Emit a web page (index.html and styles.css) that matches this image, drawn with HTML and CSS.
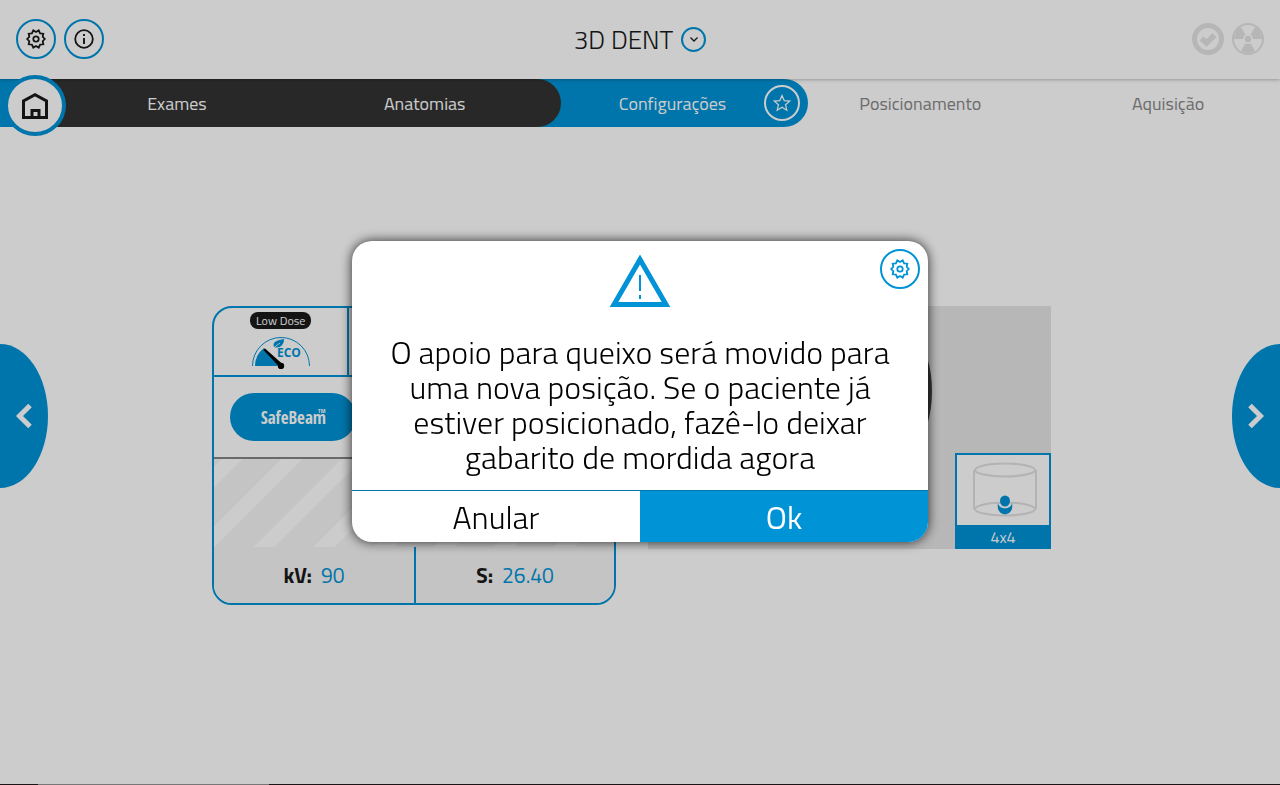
FILE: index.html
```html
<!DOCTYPE html>
<html lang="pt">
<head>
<meta charset="utf-8">
<title>3D DENT</title>
<meta name="viewport" content="width=device-width, initial-scale=1">
<link rel="stylesheet" href="styles.css">
</head>
<body>
<svg class="defs" aria-hidden="true">
  <symbol id="gear" viewBox="-12 -12 24 24">
    <path d="M8.800 0 6.700 2.200 7.300 5.300 4.100 5.600 2.700 8.600 0 7-2.700 8.600-4.100 5.600-7.300 5.300-6.700 2.200-8.800 0-6.700-2.200-7.300-5.300-4.100-5.600-2.700-8.600 0-7 2.700-8.600 4.100-5.600 7.300-5.300 6.700-2.200Z" fill="none" stroke="currentColor" stroke-width="1.800"/>
    <circle r="2.700" fill="none" stroke="currentColor" stroke-width="1.800"/>
  </symbol>
</svg>
<div class="app">
  <header class="topbar">
    <div class="tools">
      <button class="round" aria-label="Ajustes"><svg width="24" height="24"><use href="#gear"/></svg></button>
      <button class="round" aria-label="Informações">
        <svg width="24" height="24" viewBox="-12 -12 24 24"><circle r="8.800" fill="none" stroke="currentColor" stroke-width="1.800"/><path d="M0-1V5" stroke="currentColor" stroke-width="1.900"/><path d="M0-5V-3" stroke="currentColor" stroke-width="1.900"/></svg>
      </button>
    </div>
    <div class="heading">
      <h1 class="title">3D DENT</h1>
      <button class="drop" aria-label="Mostrar opções"><svg width="12" height="12" viewBox="0 0 12 12"><path d="M2.500 4.500 6 8 9.500 4.500" fill="none" stroke="currentColor" stroke-width="1.300"/></svg></button>
    </div>
    <div class="status">
      <svg width="32" height="32" viewBox="-16 -16 32 32"><circle r="13.500" fill="none" stroke="currentColor" stroke-width="5"/><path d="M-6.500-.5-1.500 4 6.500-4" fill="none" stroke="currentColor" stroke-width="5.500"/></svg>
      <svg width="32" height="32" viewBox="-16 -16 32 32"><circle r="15" fill="none" stroke="currentColor" stroke-width="2"/><circle r="3.200" fill="currentColor"/><path d="M-5 0H-14A14 14 0 0 1-7-12.100L-2.500-4.300A5 5 0 0 0-5 0ZM5 0H14A14 14 0 0 0 7-12.100L2.500-4.300A5 5 0 0 1 5 0ZM-2.500 4.300-7 12.100A14 14 0 0 0 7 12.100L2.500 4.300A5 5 0 0 1-2.500 4.300Z" fill="currentColor"/></svg>
    </div>
  </header>

  <nav class="steps">
    <button class="home" aria-label="Início">
      <svg width="28" height="28" viewBox="0 0 28 28"><path d="M2.500 25.500V9L14 2.800 25.500 9V25.500Z" fill="none" stroke="currentColor" stroke-width="3"/><path d="M11 25V18.500H18V25" fill="none" stroke="currentColor" stroke-width="3"/></svg>
    </button>
    <a href="#exames" class="step done">Exames</a>
    <a href="#anatomias" class="step done last-done">Anatomias</a>
    <div class="step current">
      <a href="#configuracoes" class="step-link">Configurações</a>
      <button class="star" aria-label="Favorito"><svg width="18" height="18" viewBox="0 0 18 18"><path d="M9 1.500 11.200 6.600 16.700 7.100 12.500 10.700 13.800 16.200 9 13.300 4.200 16.200 5.500 10.700 1.300 7.100 6.800 6.600Z" fill="none" stroke="currentColor" stroke-width="1.200"/></svg></button>
    </div>
    <a href="#posicionamento" class="step">Posicionamento</a>
    <a href="#aquisicao" class="step">Aquisição</a>
  </nav>

  <main class="content">
    <section class="settings">
      <div class="doses">
        <button class="dose">
          <span class="tag">Low Dose</span>
          <svg width="60" height="34" viewBox="0 0 60 34">
            <path d="M1.500 31A28.500 28.500 0 0 1 58.500 31" fill="none" stroke="#0093d6"/>
            <path d="M4 31Q4 20 13 13L29 31Z" fill="#0093d6"/>
            <path d="M12.500 15 14 13.500 32 29.500 29 32.500Z" fill="#000"/>
            <circle cx="30" cy="31" r="3.200" fill="#000"/>
            <path d="M23 12C21 7 26 5 33 4 33 10 29 14 23 12Z" fill="#0093d6"/>
            <path d="M21 14 29 8" stroke="#fff" stroke-width=".8"/>
            <text class="eco" x="26" y="22">ECO</text>
          </svg>
        </button>
        <div class="dose"></div>
        <div class="dose"></div>
      </div>
      <div class="modes"><button class="beam">SafeBeam<sup class="tm">TM</sup></button></div>
      <div class="stripes"></div>
      <dl class="values">
        <div class="value"><dt>kV:</dt><dd>90</dd></div>
        <div class="value"><dt>S:</dt><dd>26.40</dd></div>
      </dl>
    </section>
    <section class="preview">
      <svg class="jaw" viewBox="0 0 136 210" aria-hidden="true"><path d="M68 0C110 0 136 38 136 85 136 132 110 170 68 190 26 170 0 132 0 85 0 38 26 0 68 0Z" fill="#404444"/></svg>
      <button class="volume">
        <svg class="cylinder" width="68" height="60" viewBox="0 0 68 60">
          <g fill="none" stroke="#e0e0e0" stroke-width="2"><ellipse cx="34" cy="10" rx="30" ry="6.500"/><ellipse cx="34" cy="49" rx="30" ry="6.500"/><path d="M5 11H3V48H5M63 11H65V48H63"/></g>
          <path d="M27 43C28 50 40 50 41 43 44 58 24 58 27 43Z" fill="#0093d6"/>
          <ellipse cx="34" cy="41" rx="5" ry="5.500" fill="#0093d6"/>
        </svg>
        <span class="size">4x4</span>
      </button>
    </section>
  </main>

  <button class="pager prev" aria-label="Anterior"><svg width="18" height="26" viewBox="0 0 18 26"><path d="M15 2.500 4.500 13 15 23.500" fill="none" stroke="currentColor" stroke-width="5"/></svg></button>
  <button class="pager next" aria-label="Seguinte"><svg width="18" height="26" viewBox="0 0 18 26"><path d="M3 2.500 13.500 13 3 23.500" fill="none" stroke="currentColor" stroke-width="5"/></svg></button>
</div>

<div class="overlay">
  <div class="dialog" role="alertdialog" aria-labelledby="message">
    <button class="round dialog-gear" aria-label="Ajustes"><svg width="24" height="24"><use href="#gear"/></svg></button>
    <div class="dialog-body">
      <svg class="warning" width="62" height="54" viewBox="0 0 62 54"><path d="M31 5.500 57 50.500H5Z" fill="none" stroke="currentColor" stroke-width="5"/><path d="M31 21V37M31 41V45" stroke="currentColor" stroke-width="2"/></svg>
      <p class="message" id="message">O apoio para queixo será movido para uma nova posição. Se o paciente já estiver posicionado, fazê-lo deixar gabarito de mordida agora</p>
    </div>
    <div class="actions">
      <button class="action">Anular</button>
      <button class="action primary">Ok</button>
    </div>
  </div>
</div>
<div class="edge"></div>
</body>
</html>
```

FILE: styles.css
```css
:root {
  --blue: #0093d6;
  --ink: #1a1a1a;
}

* { box-sizing: border-box; }

body {
  margin: 0;
  font-family: "Titillium Web", Roboto, "Open Sans", sans-serif;
  color: var(--ink);
  background: #fff;
}

button {
  margin: 0;
  padding: 0;
  border: 0;
  background: none;
  font: inherit;
  color: inherit;
  cursor: pointer;
}

svg { display: block; flex: none; }
a { color: inherit; text-decoration: none; }
.defs { position: absolute; width: 0; height: 0; }

.app {
  position: relative;
  min-height: 100vh;
  overflow: hidden;
}

.topbar {
  position: relative;
  z-index: 10;
  display: grid;
  grid-template-columns: 1fr auto 1fr;
  align-items: center;
  height: 79px;
  padding: 0 16px 1px;
  box-shadow: 0 0 4px rgba(0, 0, 0, .4);
}

.tools, .status { display: flex; gap: 8px; }
.status { justify-content: flex-end; color: #e4e4e4; }

.round {
  display: grid;
  place-items: center;
  width: 40px;
  height: 40px;
  border: 2px solid var(--blue);
  border-radius: 50%;
}

.heading { display: flex; align-items: center; gap: 8px; }
.title { margin: 0; padding-top: 2px; font-size: 26px; font-weight: 300; line-height: 34px; }

.drop {
  display: grid;
  place-items: center;
  width: 25px;
  height: 25px;
  border: 2px solid var(--blue);
  border-radius: 50%;
}

.steps {
  position: relative;
  display: grid;
  grid-template-columns: repeat(5, minmax(0, 1fr));
  height: 48px;
  padding-left: 41px;
  background: linear-gradient(to right, var(--blue) 41px, transparent 41px);
  font-size: 18px;
  color: #888;
}

.home {
  position: absolute;
  z-index: 20;
  top: -4px;
  left: 4px;
  display: grid;
  place-items: center;
  width: 62px;
  height: 61px;
  border: 4px solid var(--blue);
  border-radius: 50%;
  background: #fff;
  color: var(--ink);
}

.step {
  position: relative;
  display: flex;
  align-items: center;
  justify-content: center;
  margin-right: -24px;
}

.done { z-index: 3; background: #333; color: #fff; }
.last-done { border-radius: 0 24px 24px 0; }
.current { z-index: 2; background: var(--blue); color: #fff; border-radius: 0 24px 24px 0; }

.star {
  position: absolute;
  right: 8px;
  display: grid;
  place-items: center;
  width: 36px;
  height: 36px;
  border: 2px solid #fff;
  border-radius: 50%;
}

.content {
  display: grid;
  grid-template-columns: minmax(0, 404px) minmax(0, 403px);
  justify-content: center;
  align-items: start;
  gap: 32px;
  padding: 179px 80px 0 63px;
}

.settings {
  overflow: hidden;
  border: 2px solid var(--blue);
  border-radius: 20px;
}

.doses {
  display: grid;
  grid-template-columns: repeat(3, 1fr);
  border-bottom: 2px solid var(--blue);
}

.dose {
  display: flex;
  flex-direction: column;
  align-items: center;
  gap: 6px;
  height: 67px;
  padding-top: 4px;
}

.dose + .dose { border-left: 2px solid var(--blue); }

.tag {
  padding: 0 6px;
  border-radius: 8px;
  background: var(--ink);
  color: #fff;
  font-size: 12px;
  line-height: 17px;
}

.eco { font: bold 12px "Open Sans", sans-serif; fill: var(--blue); }

.modes { display: flex; padding: 16px; border-bottom: 2px solid #858585; }

.beam {
  width: 126px;
  height: 48px;
  border-radius: 24px;
  background: var(--blue);
  color: #fff;
  font: bold 17px "Liberation Sans Narrow", "Open Sans Condensed", Roboto, sans-serif;
}

.tm { margin-left: -8px; font-size: 6px; line-height: 0; vertical-align: 11px; }

.stripes {
  height: 88px;
  background: linear-gradient(135deg, #f5f5f5 6%, #fff 6% 24%, #f5f5f5 24% 56%, #fff 56% 74%, #f5f5f5 74%) 0 0 / 60px 60px;
}

.values {
  display: grid;
  grid-template-columns: 1fr 1fr;
  margin: 0;
  background: #f5f5f5;
  font-size: 21px;
}

.value { display: flex; align-items: center; justify-content: center; gap: 9px; height: 56px; }
.value + .value { border-left: 2px solid var(--blue); }
.value dt { font-weight: 700; }
.value dd { margin: 0; color: var(--blue); }

.preview {
  display: flex;
  align-items: flex-start;
  justify-content: flex-end;
  gap: 23px;
  height: 243px;
  background: #e5e5e5;
}

.jaw { width: 136px; height: 210px; }

.volume {
  display: flex;
  flex-direction: column;
  align-self: flex-end;
  width: 96px;
  height: 96px;
  border: 2px solid var(--blue);
  background: #fff;
}

.cylinder { margin: 5px 0 5px 14px; }

.size {
  width: 100%;
  background: var(--blue);
  color: #fff;
  font-size: 16px;
  line-height: 24px;
}

.pager {
  position: absolute;
  top: 344px;
  width: 48px;
  height: 144px;
  display: grid;
  place-items: center;
  background: var(--blue);
  color: #fff;
}

.prev { left: 0; border-radius: 0 48px 48px 0 / 0 72px 72px 0; }
.next { right: 0; border-radius: 48px 0 0 48px / 72px 0 0 72px; }

.overlay {
  position: fixed;
  inset: 0;
  z-index: 100;
  display: grid;
  place-items: center;
  padding-bottom: 2px;
  background: rgba(0, 0, 0, .2);
}

.dialog {
  position: relative;
  overflow: hidden;
  width: 45%;
  min-width: 320px;
  border-radius: 20px;
  background: #fff;
  box-shadow: 0 0 12px rgba(0, 0, 0, .8);
  color: #000;
}

.dialog-gear { position: absolute; top: 8px; right: 8px; color: var(--blue); }

.dialog-body {
  display: flex;
  flex-direction: column;
  align-items: center;
  gap: 27px;
  padding: 13px 32px 15px;
}

.warning { color: var(--blue); }

.message {
  margin: 0;
  font-size: 32px;
  font-weight: 300;
  line-height: 35px;
  text-align: center;
}

.actions {
  display: grid;
  grid-template-columns: 1fr 1fr;
  border-top: 1px solid #0076ab;
}

.action { height: 51px; font-size: 32px; font-weight: 300; }
.primary { background: var(--blue); color: #fff; font-weight: 400; }

.edge {
  position: fixed;
  z-index: 110;
  bottom: 0;
  left: 0;
  right: 0;
  height: 1px;
  background: linear-gradient(to right, #1a1416 3%, #777 3% 21%, #1a1416 21%);
}
```
